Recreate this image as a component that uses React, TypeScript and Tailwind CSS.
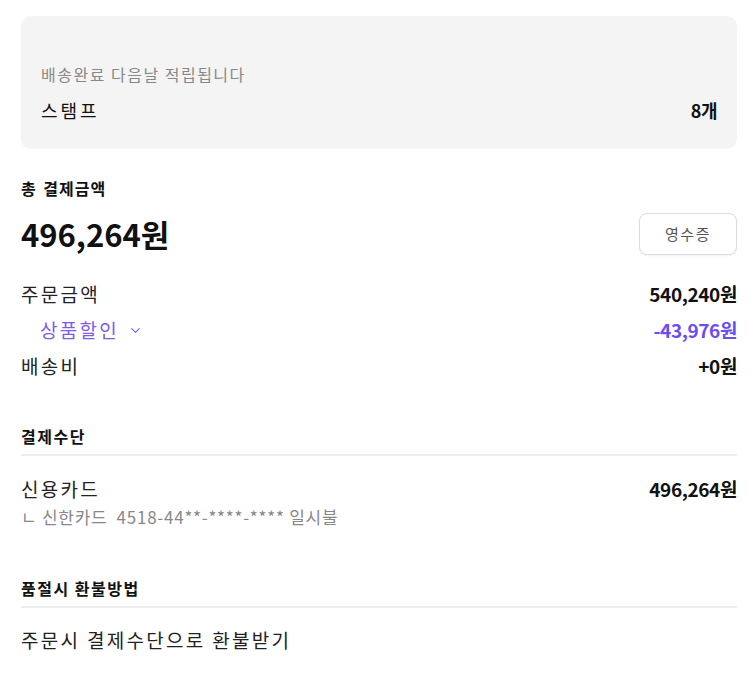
import { ChevronDown } from "lucide-react";

const font = { fontFamily: '"Noto Sans CJK KR", "Noto Sans", sans-serif' };

function Row({
  label,
  value,
  accent,
}: {
  label: React.ReactNode;
  value: string;
  accent?: boolean;
}) {
  return (
    <div className="flex items-center justify-between">
      <div className={accent ? "text-[#7c5ce6]" : "text-[#222]"}>{label}</div>
      <div
        className={`text-[19px] font-bold tracking-[-0.4px] ${
          accent ? "text-[#6b4ef0]" : "text-[#111]"
        }`}
      >
        {value}
      </div>
    </div>
  );
}

function SectionTitle({ children }: { children: React.ReactNode }) {
  return (
    <div className="border-b-2 border-[#eeeeee] pb-[6px] text-[16px] font-bold leading-[24px] tracking-[1.5px] text-[#111]">
      {children}
    </div>
  );
}

export default function App() {
  return (
    <div
      className="min-h-[693px] bg-white pl-[21px] pr-[13px] pt-[16px] text-[19px] tracking-[2.3px]"
      style={font}
    >
      {/* stamp box */}
      <div className="rounded-[10px] bg-[#f4f4f4] px-[20px] pb-[26px] pt-[46px]">
        <div className="text-[16px] leading-[24px] tracking-[1.5px] text-[#888]">
          배송완료 다음날 적립됩니다
        </div>
        <div className="mt-[11px] flex items-center justify-between text-[18px] leading-[26px] text-[#111]">
          <span className="tracking-[3px]">스탬프</span>
          <span className="font-bold tracking-[-0.5px]">8개</span>
        </div>
      </div>

      {/* total */}
      <div className="mt-[27px] text-[16px] font-bold leading-[24px] tracking-[1px] text-[#111] [word-spacing:2px]">
        총 결제금액
      </div>
      <div className="mt-[13px] flex items-center justify-between">
        <div className="text-[31px] font-bold leading-[40px] tracking-[0px] text-[#111]">
          496,264원
        </div>
        <button className="h-[42px] w-[98px] rounded-[8px] border border-[#dddddd] bg-white text-[15px] tracking-[1.5px] text-[#555] shadow-[0_1px_2px_rgba(0,0,0,0.06)]">
          영수증
        </button>
      </div>

      <div className="mt-[25px] flex flex-col gap-[8px] leading-[28px]">
        <Row label="주문금액" value="540,240원" />
        <Row
          accent
          label={
            <span className="flex items-center gap-[9px] pl-[19px]">
              상품할인
              <ChevronDown size={15} strokeWidth={1.7} />
            </span>
          }
          value="-43,976원"
        />
        <Row label="배송비" value="+0원" />
      </div>

      {/* payment */}
      <div className="mt-[44px]">
        <SectionTitle>결제수단</SectionTitle>
        <div className="mt-[19px] flex items-start justify-between leading-[28px]">
          <div>
            <div className="text-[#222]">신용카드</div>
            <div className="mt-[1px] text-[17px] leading-[26px] tracking-[0.75px] text-[#888]">
              ㄴ 신한카드&nbsp;&nbsp;4518-44**-****-**** 일시불
            </div>
          </div>
          <div className="text-[19px] font-bold tracking-[-0.4px] text-[#111]">496,264원</div>
        </div>
      </div>

      {/* refund */}
      <div className="mt-[46px]">
        <SectionTitle>품절시 환불방법</SectionTitle>
        <div className="mt-[18px] leading-[28px] text-[#222]">주문시 결제수단으로 환불받기</div>
      </div>
    </div>
  );
}
